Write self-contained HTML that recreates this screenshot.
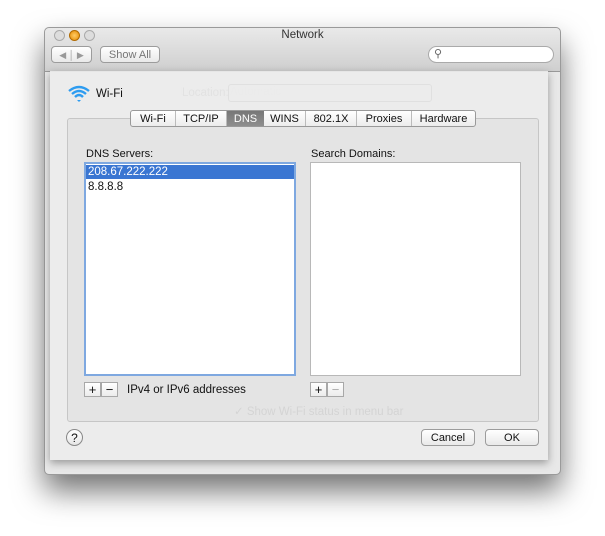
<!DOCTYPE html>
<html><head><style>
body{margin:0;width:605px;height:536px;background:#fff;position:relative;overflow:hidden;font-family:"Liberation Sans",sans-serif;font-size:11px;color:#111}
div{position:absolute;box-sizing:border-box}
.win{left:44px;top:27px;width:517px;height:448px;background:#e8e8e8;border:1px solid #9a9a9a;border-radius:5px;box-shadow:0 16px 30px rgba(0,0,0,.55)}
.tb{left:0;top:0;width:515px;height:44px;background:linear-gradient(#e9e9e9,#cfcfcf);border-bottom:1px solid #999;border-radius:5px 5px 0 0}
.sheet{left:50px;top:71px;width:498px;height:389px;background:rgba(236,236,236,.93);box-shadow:0 3px 8px rgba(0,0,0,.35)}
.btn{background:linear-gradient(#fff,#e9e9e9);border:1px solid #9c9c9c;border-radius:4px;text-align:center}
.tabbox{left:67px;top:118px;width:472px;height:304px;background:rgba(228,228,228,.95);border:1px solid #c6c6c6;border-radius:3px}
.list{background:#fff;border:1px solid #b8b8b8}
.sq{width:17px;height:15px;background:linear-gradient(#fff,#ececec);border:1px solid #a8a8a8;text-align:center;line-height:13px;font-size:13px}
.ghost{color:#d8d8d8;font-size:11.5px}
</style></head><body>
<div class="win">
 <div class="tb">
  <div style="left:9px;top:2px;width:11px;height:11px;border-radius:50%;background:#ddd;border:1px solid #aaa"></div>
  <div style="left:24px;top:2px;width:11px;height:11px;border-radius:50%;background:radial-gradient(#fc6,#e58a00);border:1px solid #b06a00"></div>
  <div style="left:39px;top:2px;width:11px;height:11px;border-radius:50%;background:#ddd;border:1px solid #aaa"></div>
  <div style="left:0;top:1px;width:515px;text-align:center;font-size:11.5px;color:#333">Network</div>
  <div class="btn" style="left:6px;top:18px;width:41px;height:17px;color:#999;font-size:9px;line-height:16px">◀ │ ▶</div>
  <div class="btn" style="left:55px;top:18px;width:60px;height:17px;color:#777;line-height:16px">Show All</div>
  <div style="left:383px;top:18px;width:126px;height:17px;background:#fff;border:1px solid #aaa;border-radius:9px;color:#666;font-size:11px;line-height:14px;padding-left:5px">&#9906;</div>
 </div>
</div>
<div class="ghost" style="left:180px;top:86px">Location:</div>
<div class="ghost" style="left:230px;top:86px">Automatic</div>
<div class="sheet"></div>
<svg style="position:absolute;left:67px;top:84px" width="24" height="20" viewBox="0 0 24 20"><path d="M2 7Q12 -1 22 7M5 10Q12 4 19 10M8 13Q12 9 16 13" stroke="#2e9cf0" stroke-width="2.4" fill="none"/><path d="M10 16L12 18L14 16Z" fill="#2e9cf0"/></svg>
<div style="left:96px;top:88px;font-size:11.5px">Wi-Fi</div>
<div class="ghost" style="left:182px;top:87px;color:#e2e2e2">Location:</div>
<div style="left:228px;top:84px;width:204px;height:18px;border:1px solid #e0e0e0;border-radius:3px"></div>
<div class="tabbox"></div>
<div style="left:130px;top:110px;width:346px;height:17px;background:linear-gradient(#fff,#ececec);border:1px solid #999;border-radius:3px;display:flex;font-size:11px;line-height:16px">
 <span style="width:44px;text-align:center;border-right:1px solid #bbb">Wi-Fi</span>
 <span style="width:50px;text-align:center;border-right:1px solid #bbb">TCP/IP</span>
 <span style="width:37px;text-align:center;background:linear-gradient(#777,#8e8e8e);color:#fff">DNS</span>
 <span style="width:41px;text-align:center;border-right:1px solid #bbb">WINS</span>
 <span style="width:50px;text-align:center;border-right:1px solid #bbb">802.1X</span>
 <span style="width:54px;text-align:center;border-right:1px solid #bbb">Proxies</span>
 <span style="flex:1;text-align:center">Hardware</span>
</div>
<div style="left:86px;top:148px">DNS Servers:</div>
<div style="left:311px;top:148px">Search Domains:</div>
<div class="list" style="left:84px;top:162px;width:212px;height:214px;border:2px solid #7ea8e0">
 <div style="left:0;top:1px;width:208px;height:14px;background:#3a76d2;color:#fff;padding-left:2px;line-height:14px;font-size:11.5px">208.67.222.222</div>
 <div style="left:2px;top:16px;line-height:14px;font-size:11.5px">8.8.8.8</div>
</div>
<div class="list" style="left:310px;top:162px;width:211px;height:214px"></div>
<div class="sq" style="left:84px;top:382px">+</div>
<div class="sq" style="left:101px;top:382px">−</div>
<div style="left:127px;top:384px;font-size:11.5px">IPv4 or IPv6 addresses</div>
<div class="sq" style="left:310px;top:382px">+</div>
<div class="sq" style="left:327px;top:382px;color:#aaa">−</div>
<div class="ghost" style="left:234px;top:404px;color:#d4d4d4">✓ Show Wi-Fi status in menu bar</div>
<div style="left:66px;top:429px;width:17px;height:17px;border-radius:50%;border:1px solid #888;background:linear-gradient(#fff,#e6e6e6);text-align:center;font-size:12px;line-height:16px">?</div>
<div class="btn" style="left:421px;top:429px;width:54px;height:17px;line-height:16px">Cancel</div>
<div class="btn" style="left:485px;top:429px;width:54px;height:17px;line-height:16px">OK</div>
</body></html>
